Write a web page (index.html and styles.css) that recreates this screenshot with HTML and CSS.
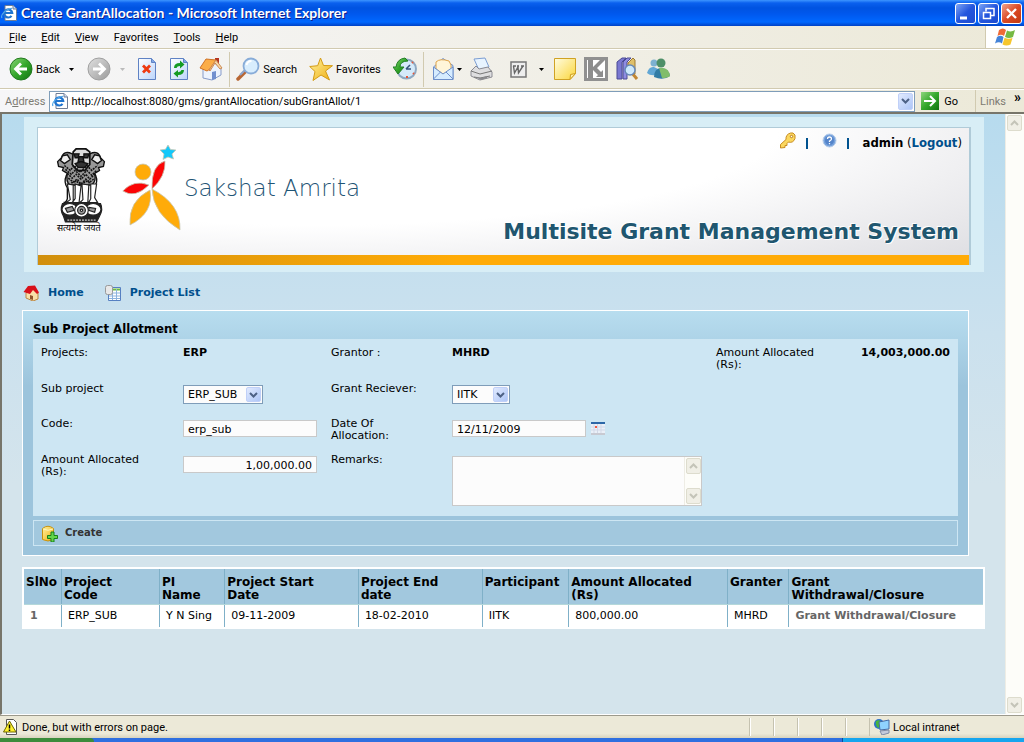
FILE: index.html
```html
<!DOCTYPE html>
<html lang="en">
<head>
<meta charset="utf-8">
<title>Create GrantAllocation</title>
<link rel="stylesheet" href="styles.css">
</head>
<body>
<svg class="defs" aria-hidden="true">
  <defs>
    <linearGradient id="green" x1="0" y1="0" x2="1" y2="1"><stop offset="0" stop-color="#8ed67c"/><stop offset=".5" stop-color="#35a82b"/><stop offset="1" stop-color="#127311"/></linearGradient>
    <linearGradient id="grey" x1="0" y1="0" x2="1" y2="1"><stop offset="0" stop-color="#e0e0e0"/><stop offset="1" stop-color="#9b9b9b"/></linearGradient>
    <linearGradient id="paper" x1="0" y1="0" x2="1" y2="1"><stop offset="0" stop-color="#fff"/><stop offset="1" stop-color="#bcd5fb"/></linearGradient>
    <linearGradient id="note" x1="0" y1="0" x2="1" y2="1"><stop offset="0" stop-color="#fffce0"/><stop offset="1" stop-color="#fbd63a"/></linearGradient>
    <linearGradient id="gold" x1="0" y1="0" x2="1" y2="1"><stop offset="0" stop-color="#fff3a0"/><stop offset="1" stop-color="#efae10"/></linearGradient>
    <symbol id="ie-page" viewBox="0 0 16 16"><path d="M4 .5h8l3.500 3.500v11.500H4z" fill="#fff" stroke="#6f7d96"/><path d="M12 .5V4h3.500" fill="#cfdcf2" stroke="#6f7d96"/><path d="M10.500 10.800a4 4 0 1 1 .7-2.800H3.500" fill="none" stroke="#1f74cf" stroke-width="2.200"/><path d="M1 13C-1 10 6 3 11 3.500" fill="none" stroke="#54a8e8" stroke-width="1.200"/></symbol>
    <symbol id="chev-down" viewBox="0 0 9 6"><path d="M1 1l3.500 3.500L8 1" fill="none" stroke="currentColor" stroke-width="2"/></symbol>
    <symbol id="chev-up" viewBox="0 0 9 6"><path d="M1 5l3.500-3.500L8 5" fill="none" stroke="currentColor" stroke-width="2"/></symbol>
    <symbol id="caret" viewBox="0 0 5 3"><path d="M0 0h5L2.500 3z" fill="currentColor"/></symbol>
  </defs>
</svg>

<header class="titlebar">
  <svg width="16" height="16"><use href="#ie-page"/></svg>
  <h1>Create GrantAllocation - Microsoft Internet Explorer</h1>
  <div class="window-buttons">
    <button class="win" aria-label="Minimize"><svg width="19" height="19"><path d="M4 14h7" stroke="#fff" stroke-width="3"/></svg></button>
    <button class="win" aria-label="Restore"><svg width="19" height="19"><path d="M7 7.500V4.500h8v7h-3M7 4.500h8" fill="none" stroke="#fff" stroke-width="1.500"/><path d="M4.500 8.500h7v6h-7zM4 8.500h8" fill="none" stroke="#fff" stroke-width="1.500"/></svg></button>
    <button class="win close" aria-label="Close"><svg width="19" height="19"><path d="M5 5l9 9M14 5l-9 9" stroke="#fff" stroke-width="2.400"/></svg></button>
  </div>
</header>

<nav class="menubar">
  <button><u>F</u>ile</button><button><u>E</u>dit</button><button><u>V</u>iew</button><button>F<u>a</u>vorites</button><button><u>T</u>ools</button><button><u>H</u>elp</button>
  <div class="throbber"><svg width="20" height="18" viewBox="0 0 20 18"><path d="M4 2q4-3 7 0L9 8Q6 5.500 2.500 8z" fill="#ef6a35"/><path d="M12 2.500q4 2 8-.5l-2 7q-4 2-8 0z" fill="#76b943"/><path d="M2 9q3.500-2.500 6.500 0L7 15.500Q4 13 0 15.500z" fill="#4483d8"/><path d="M9.500 9.700q4 2 8 .3l-2 6.500q-4 2-8 0z" fill="#f6c62d"/></svg></div>
</nav>

<div class="toolbar">
  <button class="tool back"><svg width="24" height="24"><circle cx="12" cy="12" r="11" fill="url(#green)" stroke="#237a20"/><path d="M18 12H7M12 6.500L6.500 12l5.500 5.500" fill="none" stroke="#fff" stroke-width="2.800"/></svg><span>Back</span><svg class="drop" width="5" height="3"><use href="#caret"/></svg></button>
  <button class="tool forward" aria-label="Forward"><svg width="24" height="24"><circle cx="12" cy="12" r="11" fill="url(#grey)" stroke="#a0a0a0"/><path d="M6 12h11M12 6.500l5.500 5.500-5.500 5.500" fill="none" stroke="#fff" stroke-width="2.800"/></svg><svg class="drop pale" width="5" height="3"><use href="#caret"/></svg></button>
  <button class="tool stop" aria-label="Stop"><svg width="20" height="24"><path d="M1.500 1.500h13l4 4v17h-17z" fill="url(#paper)" stroke="#5f82c4"/><path d="M14.500 1.500v4h4" fill="#7fa6e6" stroke="#5f82c4"/><path d="M6 8.500l7 7M13 8.500l-7 7" stroke="#ee3a12" stroke-width="2.800"/></svg></button>
  <button class="tool refresh" aria-label="Refresh"><svg width="20" height="24"><path d="M1.500 1.500h13l4 4v17h-17z" fill="url(#paper)" stroke="#5f82c4"/><path d="M14.500 1.500v4h4" fill="#7fa6e6" stroke="#5f82c4"/><path d="M5 11q0-5 6-5V3.500l4.500 4-4.500 4V9q-3 0-3.500 2zM15 13q0 5-6 5v2.500L4.500 16.500 9 13v2.200q3-.2 3.500-2.200z" fill="#159b24"/></svg></button>
  <button class="tool home" aria-label="Home"><svg width="24" height="24"><path d="M16 1h4v6h-4z" fill="#b53622"/><path d="M4 12v9l9 2 9-5v-7L14 5z" fill="#edf3fd" stroke="#879bc9"/><path d="M1 11L7 2l10 1-6 9-3 2z" fill="#fbad48" stroke="#cf7226"/><path d="M17 3l6 8-2 1-5-6-5 8-1-1z" fill="#f6d8a9" stroke="#ce8850"/><path d="M13 15l4-1v8l-4 1z" fill="#7290cf"/></svg></button>
  <i class="rule"></i>
  <button class="tool search"><svg width="24" height="24"><path d="M10 14L2 22" stroke="#b86633" stroke-width="3.500" stroke-linecap="round"/><path d="M9 13l-5 5" stroke="#8ca4cc" stroke-width="2"/><circle cx="15" cy="9" r="7.500" fill="#d8edfd" stroke="#88acd8" stroke-width="1.800"/><path d="M10.500 8q1-4 5-4" stroke="#fff" stroke-width="2" fill="none"/></svg><span>Search</span></button>
  <button class="tool"><svg width="24" height="24"><path d="M11.500 1l3 7.500 9 .2-7 5.300 4 9-8.500-5-8 5.500 2-9L.7 9.500l8-.8z" fill="url(#gold)" stroke="#d49b15" stroke-linejoin="round"/></svg><span>Favorites</span></button>
  <button class="tool history" aria-label="History"><svg width="24" height="24"><circle cx="13.500" cy="12" r="9.500" fill="#d5eafa" stroke="#8fa9c2" stroke-width="2"/><path d="M13 12l4-4M13 12h5" stroke="#34527c" stroke-width="1.500"/><path d="M14 19v2M20 16l1 1M19 6l1-1" stroke="#e3583b" stroke-width="2"/><path d="M15 4Q7 4 7 10h4l-6 7-5-7h3Q4 2 12 1z" fill="url(#green)" stroke="#217e24"/></svg></button>
  <i class="rule"></i>
  <button class="tool mail" aria-label="Mail"><svg width="23" height="24"><path d="M1.500 10L11 1.500l10 7v14H1.500z" fill="#bddcff" stroke="#6d8fca"/><path d="M4 5q4-4 13-1l2 4v5l-8 4-7-5z" fill="#fff5d9" stroke="#e1a449"/><path d="M1.500 10l9.500 7 10-7v12.500H1.500z" fill="#d6ecff" stroke="#6d8fca"/><path d="M1.500 22l7-7M21 22l-7-7" stroke="#6d8fca"/></svg><svg class="drop" width="5" height="3"><use href="#caret"/></svg></button>
  <button class="tool print" aria-label="Print"><svg width="24" height="24"><path d="M4 2l11-1 4 9-10 3z" fill="#e8f4ff" stroke="#7c9ed3"/><path d="M1 14L6 9l3 3 9-2 4 5v5l-12 3-9-4z" fill="#dedee0" stroke="#8c8c94"/><path d="M1 14l9 3 12-3M4 20l6 1 10-2" stroke="#777" fill="none"/><path d="M6 20l5 1 6-2v2l-6 2z" fill="#8a8a8e"/></svg></button>
  <button class="tool edit" aria-label="Edit"><svg width="17" height="17"><path d="M1 1h15v15H1z" fill="#eee" stroke="#777" stroke-width="1.500"/><path d="M3.500 5l1 7L8 6l.5 6L13 5M3 5h3M7 5h2M11 5h3" fill="none" stroke="#666" stroke-width="1.400"/></svg><svg class="drop" width="5" height="3"><use href="#caret"/></svg></button>
  <button class="tool" aria-label="Notes"><svg width="22" height="22"><path d="M.5.500h21v15l-5.500 6H.5z" fill="url(#note)" stroke="#d0a223"/><path d="M21.500 15.500l-5 1-.5 5z" fill="#fff0a4" stroke="#cf9f20"/></svg></button>
  <button class="tool" aria-label="Kaspersky"><svg width="24" height="24"><path d="M0 0h24v24H0z" fill="#909090"/><path d="M3 3h18v18H3z" fill="#fff"/><path d="M4 3h5v18H4zM16 3h5l-9 9H9v-2zM9 11h4l4 4 2-2v7h-7l2-2-5-5z" fill="#8d8d8d"/></svg></button>
  <button class="tool" aria-label="Research"><svg width="23" height="24"><path d="M1 5l5-4h4L6 5v17H1z" fill="#7a78d1" stroke="#4b4a94"/><path d="M7 5l4-4h4l-4 4v17H7z" fill="#8f8de2" stroke="#4b4a94"/><path d="M12 6l5-5 2 2v14h-7z" fill="#dfc06a" stroke="#9d7a35"/><path d="M16 16l5 6" stroke="#c18632" stroke-width="3"/><circle cx="14" cy="13" r="5" fill="#cde9fc" stroke="#6688b8" stroke-width="1.500"/></svg></button>
  <button class="tool" aria-label="Messenger"><svg width="24" height="24"><circle cx="7" cy="6" r="3.500" fill="#7db1d1"/><path d="M0 16q2-7 7-6l4 2-2 6q-6 1-9-2z" fill="#61a7d5"/><circle cx="14" cy="6" r="4.500" fill="#4e8f68"/><path d="M7 20q0-9 8-9 7 1 8 8-7 5-16 1z" fill="#317ca5"/><path d="M12 11l3 10q6 0 8-2-1-8-8-8z" fill="#80bd6b"/></svg></button>
</div>

<form class="addressbar">
  <label for="url">A<u>d</u>dress</label>
  <div class="address-box">
    <svg width="16" height="16"><use href="#ie-page"/></svg>
    <input id="url" type="text" value="http://localhost:8080/gms/grantAllocation/subGrantAllot/1">
    <button type="button" class="xp-arrow" aria-label="Show addresses"><svg width="9" height="6"><use href="#chev-down"/></svg></button>
  </div>
  <button type="button" class="go"><svg width="18" height="18"><path d="M0 0h18v18H0z" fill="url(#green)"/><path d="M3 9h10M9 4l5 5-5 5" fill="none" stroke="#fff" stroke-width="2"/></svg><span>Go</span></button>
  <button type="button" class="links"><span>Links</span><b>»</b></button>
</form>

<div class="viewport">
  <main class="page">
    <header class="banner-wrap">
      <div class="banner">
        <div class="account">
          <a href="#" aria-label="Change password"><svg width="17" height="17"><path d="M1.500 16v-3.500L7 7.500q-.5-5 4.500-6.500h2.500l2 2v3.500Q14 11.500 9.500 10L8 11.500v2H6v2z" fill="#fbd75e" stroke="#c78c22"/><circle cx="12.500" cy="4.500" r="1.200" fill="#fff" stroke="#b97c15"/></svg></a>
          <i class="bar"></i>
          <a href="#" aria-label="Help"><svg width="15" height="15"><circle cx="7.500" cy="7.500" r="6.500" fill="#76a2dc" stroke="#b7cdea"/><circle cx="7.500" cy="7.500" r="4.500" fill="#5484ca"/><path d="M5.500 6q0-2 2-2t2 2q0 1-2 2v1M7.500 10v1.300" fill="none" stroke="#fff" stroke-width="1.300"/></svg></a>
          <i class="bar"></i>
          <span class="who"><b>admin</b> (<a href="#">Logout</a>)</span>
        </div>
        <div class="brand">
          <svg class="emblem" width="52" height="78" viewBox="0 0 52 78" role="img" aria-label="State Emblem of India">
            <g fill="#fff" stroke="#111" stroke-width="1.400">
              <path d="M11 29Q8 36 12 42v11q-1 4-4 4h35q-3-1-4-4V42q5-6 2-13L34 17H18z" fill="#f4f4f4"/>
              <path d="M17 7Q8 3 6 11l-4 4 1 5 5 1-1 3 5 3q-2 9 3 12h22q5-4 3-12l5-3-1-3 5-1 1-5-4-4Q44 3 35 7z" fill="#999"/>
              <path d="M18 5l3-3h10l4 3v13l-5 6h-8l-5-6z" fill="#ddd" stroke-width="1.800"/>
              <path d="M19 7h5l-1 4h-3zM29 7h5l-1 4h-4zM24 10h4l1 5h-6zM20 17l6-2 7 2-3 4h-7z" fill="#333"/>
              <path d="M7 9l5-1 3 5-6 4-4-3zM45 9l-5-1-3 5 6 4 4-3z" fill="#eee"/>
            </g>
            <g fill="none" stroke="#111" stroke-width="1.600" stroke-dasharray="2 1">
              <path d="M9 19l6 5 4-5 6 7 7-7 5 5 6-5M10 23l6 5 4-4 6 6 6-6 5 5 5-5M12 27l5 5 4-4 5 5 5-5 4 5 5-5M13 32l5 4 4-3 4 5 5-5 4 3 4-3M16 37l5-2 5 4 5-4 4 2"/>
            </g>
            <g fill="#fff" stroke="#222" stroke-width="1.200">
              <path d="M12 38l3 16-4 3h7V39zM20 38v15l-3 4h7l2-17zM27 38l1 16-3 3h8l1-18zM36 38v15l-2 4h9l-3-5 2-14z"/>
              <path d="M7 58h39q3 6-1 13l-3 6H10l-2-6q-4-6-1-13z" fill="#222"/>
              <ellipse cx="14.500" cy="64" rx="8" ry="6"/><ellipse cx="38.500" cy="64" rx="8" ry="6"/>
              <circle cx="26.500" cy="65" r="7"/><circle cx="26.500" cy="65" r="4" fill="#999"/><circle cx="26.500" cy="65" r="1.200"/>
              <path d="M10 63l7-2 2 4-7 2zM34 62l7 1-1 4-6-2z" fill="#999"/>
              <path d="M12 75h29" stroke="#ccc" stroke-dasharray="2 1"/>
            </g>
          </svg>
          <p class="motto">सत्यमेव जयते</p>
        </div>
        <svg class="figure" width="62" height="88" viewBox="0 0 62 88" aria-hidden="true">
          <g stroke="#c6c6b4" stroke-width=".8">
            <path d="M46 2l2.500 4.500 5.500.5-4 4 1.500 5-5.500-2-5 2.500 1-5.500-4-4 5.500-.7z" fill="#14c8fa"/>
            <circle cx="21" cy="29" r="8" fill="#ffab09"/>
            <path d="M30 46Q29 22 43 18q1 15-13 28z" fill="#fb0505"/>
            <path d="M27 42Q12 36 .8 48q12 8 26.200-6z" fill="#fb0505"/>
            <path d="M28 47Q6 58 8 82q24-12 20-35z" fill="#ffab09"/>
            <path d="M30 46q1 25 28 41 1-26-28-41z" fill="#ffab09"/>
          </g>
        </svg>
        <p class="product">Sakshat Amrita</p>
        <h2>Multisite Grant Management System</h2>
      </div>
    </header>

    <nav class="crumbs">
      <a href="#"><svg width="16" height="16"><path d="M3 8v5l7 3 5-2V8L9 3z" fill="#f9dfa8" stroke="#bd8641"/><path d="M.5 7L5 1l7-.5 4 7-2 1.500L10 5 7 9z" fill="#d8101a"/><path d="M7 10l3 1v4l-3-1z" fill="#91552c"/></svg><span>Home</span></a>
      <a href="#"><svg width="16" height="16"><path d="M3.500 2.500h12v13h-12z" fill="#fff" stroke="#5680c2"/><path d="M7 4.500h8" stroke="#6cbd45" stroke-width="2"/><path d="M4 8h11M4 11h11M4 13.500h11M7.500 4v11M11.500 4v11" stroke="#8cb3de"/><rect x=".5" y=".5" width="7" height="9" rx="2" fill="#e8e8e8" stroke="#999"/></svg><span>Project List</span></a>
    </nav>

    <form class="allotment">
      <h3>Sub Project Allotment</h3>
      <div class="fields">
        <span>Projects:</span><b>ERP</b><span>Grantor :</span><b>MHRD</b>
        <div class="total"><span>Amount Allocated (Rs):</span><b>14,003,000.00</b></div>

        <label for="sub">Sub project</label>
        <div class="control"><span class="select wide"><select id="sub"><option>ERP_SUB</option></select><i class="xp-arrow"><svg width="9" height="6"><use href="#chev-down"/></svg></i></span></div>
        <label for="receiver">Grant Reciever:</label>
        <div class="control"><span class="select"><select id="receiver"><option>IITK</option></select><i class="xp-arrow"><svg width="9" height="6"><use href="#chev-down"/></svg></i></span></div>
        <span></span>

        <label for="code">Code:</label>
        <div class="control"><input id="code" type="text" value="erp_sub"></div>
        <label for="date">Date Of Allocation:</label>
        <div class="control"><input id="date" type="text" value="12/11/2009"><button type="button" class="calendar" aria-label="Pick a date"><svg width="14" height="13"><path d="M0 0h14v13H0z" fill="#eaf0f8"/><path d="M0 1h14" stroke="#2c67a7" stroke-width="2"/><path d="M0 5h14M0 8h14M3 2v10M6.500 2v10M10 2v10" stroke="#d3d9e8"/><path d="M4 4h2v2H4z" fill="#f15a43"/><path d="M0 12h14" stroke="#c8cad2" stroke-width="2"/></svg></button></div>
        <span></span>

        <label for="amount">Amount Allocated (Rs):</label>
        <div class="control"><input id="amount" class="number" type="text" value="1,00,000.00"></div>
        <label for="remarks">Remarks:</label>
        <div class="control"><div class="remarks"><textarea id="remarks"></textarea><div class="scroll"><button type="button" aria-label="Scroll up"><svg width="9" height="6"><use href="#chev-up"/></svg></button><button type="button" aria-label="Scroll down"><svg width="9" height="6"><use href="#chev-down"/></svg></button></div></div></div>
        <span></span>
      </div>
      <div class="actions"><button type="button"><svg width="17" height="17"><path d="M1.500 3.500Q7-1 12.500 3.500v11q-5.500 3-11 0z" fill="url(#gold)" stroke="#c7920e"/><path d="M2 4q5 2.500 10 0" fill="none" stroke="#fff6bd"/><path d="M10 7h3v3.500h3.500v3H13V17h-3v-3.500H6.500v-3H10z" fill="#63d54a" stroke="#16801a"/></svg><span>Create</span></button></div>
    </form>

    <table class="grants">
      <colgroup><col class="c-no"><col class="c-code"><col class="c-pi"><col class="c-start"><col class="c-end"><col class="c-part"><col class="c-amount"><col class="c-granter"><col class="c-grant"></colgroup>
      <thead><tr><th>SlNo</th><th>Project<br>Code</th><th>PI<br>Name</th><th>Project Start<br>Date</th><th>Project End<br>date</th><th>Participant</th><th>Amount Allocated<br>(Rs)</th><th>Granter</th><th>Grant<br>Withdrawal/Closure</th></tr></thead>
      <tbody><tr><td><a href="#">1</a></td><td>ERP_SUB</td><td>Y N Sing</td><td>09-11-2009</td><td>18-02-2010</td><td>IITK</td><td>800,000.00</td><td>MHRD</td><td><a href="#">Grant Withdrawal/Closure</a></td></tr></tbody>
    </table>
  </main>
  <div class="scroll"><button aria-label="Scroll page up"><svg width="9" height="6"><use href="#chev-up"/></svg></button><button aria-label="Scroll page down"><svg width="9" height="6"><use href="#chev-down"/></svg></button></div>
</div>

<footer class="statusbar">
  <svg width="16" height="16"><path d="M3.500.5h7l3 3v12h-10z" fill="#fff" stroke="#555"/><path d="M6.500 2L13 13H.5z" fill="#fff22c" stroke="#6d6700"/><path d="M6.500 5.500v4M6.500 10.500V12" stroke="#000" stroke-width="1.500"/></svg>
  <span class="message">Done, but with errors on page.</span>
  <i></i><i></i><i></i><i></i><i></i>
  <span class="zone"><svg width="16" height="16"><circle cx="5" cy="5" r="5" fill="#2e72ca"/><path d="M2 2q4-2 5 1T4 9Q1 6 2 2z" fill="#49b53d"/><path d="M5 3l10-2v9l-9 1z" fill="#8fd2ff" stroke="#466ba5"/><path d="M6 12l9-1v3l-7 2z" fill="#c4cbdc" stroke="#7f8aa5"/></svg><span>Local intranet</span></span>
</footer>
<div class="taskbar"><span class="start"></span><span class="tray"></span></div>
</body>
</html>
```
FILE: styles.css
```css
* { box-sizing: border-box; }
body {
  margin: 0;
  min-height: 100vh;
  display: flex;
  flex-direction: column;
  background: #ece9d8;
  color: #000;
  font: 11px/12px "DejaVu Sans", sans-serif;
}
button, input, select, textarea { font: inherit; color: inherit; margin: 0; border-radius: 0; }
button { background: none; border: 0; padding: 0; }
svg { display: block; flex: none; }
h1, h2, h3, p { margin: 0; }
.defs { position: absolute; width: 0; height: 0; }

.titlebar {
  height: 26px;
  display: flex;
  align-items: center;
  gap: 4px;
  padding-left: 1px;
  background: linear-gradient(#3d95ff 0, #0a60ee 3px, #0053e1 8px, #0058ee 14px, #0068ff 22px, #0041c5 26px);
  color: #fff;
}
.titlebar h1 { flex: 1; font: bold 14px/26px Lato, sans-serif; text-shadow: 1px 1px 0 #0f1e88; white-space: nowrap; }
.window-buttons { display: flex; gap: 2px; padding-right: 2px; }
.win { width: 21px; height: 21px; border: 1px solid #fff; border-radius: 3px; background: linear-gradient(135deg, #7ea5f5, #2456dd 50%, #1c4bd0); }
.close { background: linear-gradient(135deg, #f0a38c, #dc4a26 50%, #c23a12); }

.menubar, .toolbar, .addressbar, .statusbar { font: 11px/14px Roboto, sans-serif; }
.menubar button, .tool span, .addressbar label, .address-box input, .go span, .links span, .message, .zone span { padding-top: 1px; }
.menubar {
  height: 23px;
  display: flex;
  align-items: center;
  gap: 15px;
  padding-left: 9px;
  background: linear-gradient(90deg, #f6f6f8, #ece9d8);
  border-bottom: 1px solid #d1cab0;
}
.throbber { margin-left: auto; align-self: stretch; width: 39px; display: flex; align-items: center; justify-content: center; background: #fff; border-left: 1px solid #d1cab0; }

.toolbar {
  height: 40px;
  display: flex;
  align-items: center;
  gap: 8px;
  padding-left: 9px;
  background: linear-gradient(90deg, #f6f6f8, #ece9d8);
  border-top: 1px solid #fff;
  border-bottom: 1px solid #d1cab0;
}
.tool { display: flex; align-items: center; gap: 3px; }
.back .drop { margin-left: 6px; }
.back { margin-right: 5px; }
.forward { margin-right: 4px; gap: 9px; }
.pale { color: #bbb; }
.stop { margin-right: 4px; }
.refresh { margin-right: 2px; }
.home { margin-right: -2px; }
.search { margin-left: -2px; margin-right: 4px; }
.history { margin-left: 4px; margin-right: -2px; }
.mail { gap: 2px; }
.print { margin-right: 8px; }
.edit { gap: 12px; margin-right: 2px; }
.rule { width: 1px; height: 35px; background: #d1cab0; }

.addressbar {
  height: 23px;
  display: flex;
  align-items: center;
  padding-left: 5px;
  background: linear-gradient(90deg, #f6f6f8, #ece9d8);
  border-top: 1px solid #fff;
}
.addressbar label { color: #7d7b72; padding-right: 4px; }
.address-box { flex: 1; height: 21px; display: flex; align-items: center; gap: 3px; padding: 1px 1px 1px 2px; background: #fff; border: 1px solid #7f9db9; }
.address-box input { flex: 1; min-width: 0; border: 0; padding: 1px 0 0; background: none; outline: 0; }
.xp-arrow { width: 15px; height: 17px; display: grid; place-items: center; color: #4d6185; border: 1px solid #c0d0f8; border-radius: 2px; background: linear-gradient(135deg, #e1eafe, #aec6f7); }
.go { display: flex; align-items: center; gap: 5px; margin-left: 6px; padding-right: 17px; }
.links { display: flex; align-items: center; align-self: stretch; gap: 8px; padding: 0 3px 0 4px; border-left: 1px solid #d1cab0; color: #7d7b72; }
.links b { color: #000; font-size: 14px; line-height: 14px; align-self: start; }

.viewport { flex: 1; display: flex; border-top: 2px solid #77756a; border-left: 2px solid #77756a; border-bottom: 1px solid #fff; }
.page { flex: 1; min-width: 0; padding: 3px 0 12px; background: linear-gradient(#b7dbee, #cbe1ee 220px, #d4e4ec 370px); }
.scroll { width: 17px; display: flex; flex-direction: column; justify-content: space-between; padding: 1px; background: #fdfdf9; border-left: 1px solid #eeede5; }
.scroll button { width: 15px; height: 16px; display: grid; place-items: center; color: #c4c4b8; background: #f0efe6; border: 1px solid #dddccd; border-radius: 2px; }
.viewport > .scroll { width: 19px; padding-right: 3px; }

.banner-wrap { margin: 0 21px 0 22px; padding: 10px 13px 7px; background: #d8eef6; }
.banner {
  position: relative;
  height: 138px;
  display: flex;
  padding-left: 17px;
  border: 1px solid #b0cbd8;
  border-right-width: 2px;
  border-bottom: 0;
  background: linear-gradient(90deg, #d18f0d, #ffab07 45%) bottom / 100% 10px no-repeat, radial-gradient(ellipse at 30% 0, #fff 50%, #e0e0e4 95%);
}
.account { position: absolute; top: 1px; right: 7px; display: flex; align-items: center; }
.account .bar { width: 2px; height: 11px; margin: 6px 14px 0 10px; background: #00528f; }
.account .who { font: 13px/16px "DejaVu Sans Condensed", "DejaVu Sans", sans-serif; padding-top: 6px; }
.account a { color: #004f8c; font-weight: bold; text-decoration: none; }
.brand { padding-top: 19px; width: 54px; }
.emblem { height: 76px; }
.motto { padding-left: 2px; font: 9px/12px "Noto Sans Devanagari", "Noto Sans", sans-serif; white-space: nowrap; }
.figure { margin: 15px 0 0 13px; }
.product { padding: 45px 0 0; color: #1f5575; font: 200 23px/30px "DejaVu Sans", "DejaVu Sans Light", sans-serif; }
.banner h2 { position: absolute; right: 10px; bottom: 17px; color: #20566f; font: bold 22px/32px "DejaVu Sans", sans-serif; text-shadow: 1px 1px #fff, -1px -1px #fff; white-space: nowrap; }

.crumbs { display: flex; gap: 21px; padding: 13px 0 9px 21px; }
.crumbs a { display: flex; align-items: center; gap: 9px; color: #004f8c; font-weight: bold; text-decoration: none; }

.allotment { margin: 0 36px 0 20px; padding: 0 10px 9px; border: 1px solid #fff; background: linear-gradient(#b8ddef, #9cc4dc 75px); }
.allotment h3 { font: bold 13px/14px "DejaVu Sans Condensed", "DejaVu Sans", sans-serif; padding: 11px 0 3px; }
.fields {
  display: grid;
  grid-template-columns: 142fr 148fr 121fr 264fr 234fr;
  grid-template-rows: 36px 35px 36px auto;
  align-items: start;
  padding: 8px 8px 10px;
  background: #cde6f3;
}
.fields > label, .total > span { max-width: 102px; }
.total { display: flex; justify-content: space-between; }
.control { display: flex; align-items: center; padding-top: 2px; }
.control input, .remarks { border: 1px solid #c9c9c9; background: #fcfcfc; }
.control input { width: 134px; height: 17px; padding: 2px 4px 0; }
.control .number { text-align: right; }
.select { display: grid; width: 58px; align-items: center; justify-items: end; border: 1px solid #7f9db9; background: #fcfcfc; }
.select.wide { width: 80px; }
.select > * { grid-area: 1 / 1; }
.select select { appearance: none; width: 100%; height: 17px; padding: 0 18px 0 4px; border: 0; background: none; }
.select .xp-arrow { height: 15px; margin-right: 1px; pointer-events: none; }
.calendar { margin-left: 5px; }
.remarks { display: flex; width: 250px; height: 50px; }
.remarks textarea { flex: 1; min-width: 0; border: 0; background: none; resize: none; overflow: hidden; }
.actions { margin-top: 4px; border: 1px solid #cde6f3; background: #a2c8de; padding: 3px 7px; }
.actions button { display: flex; align-items: center; gap: 7px; height: 18px; color: #333; font-size: 10px; font-weight: bold; }

.grants { width: calc(100% - 40px); margin: 11px 20px 0; table-layout: fixed; border-collapse: collapse; border: 2px solid #fff; background: #fff; }
.grants th, .grants td { text-align: left; vertical-align: top; border-left: 1px solid #7fb0c8; }
.grants th { height: 36px; padding: 7px 0 2px 2px; background: #a2c8de; border-top: 1px solid #b5d8da; border-bottom: 1px solid #b5d8da; font: bold 12px/13px "DejaVu Sans", sans-serif; }
.grants td { height: 23px; padding: 5px 0 5px 6px; white-space: nowrap; }
.grants a { color: #666; font-weight: bold; text-decoration: none; }
.c-no { width: 4%; }
.c-code { width: 10.2%; }
.c-pi { width: 6.8%; }
.c-start { width: 13.9%; }
.c-end { width: 12.9%; }
.c-part { width: 9%; }
.c-amount { width: 16.5%; }
.c-granter { width: 6.4%; }
.c-grant { width: 20.3%; }

.statusbar { height: 23px; display: flex; align-items: center; padding-left: 3px; border-top: 1px solid #9c9a8c; background: linear-gradient(#ece9d8 80%, #d8d3be); }
.message { flex: 1; padding-left: 3px; }
.statusbar > i { width: 24px; height: 18px; border-left: 1px solid #c5c2b0; box-shadow: inset 1px 0 #fff; }
.zone { display: flex; align-items: center; gap: 3px; width: 155px; height: 18px; padding-left: 4px; border-left: 1px solid #c5c2b0; }
.taskbar { height: 4px; display: flex; justify-content: space-between; background: #2f6fe0; }
.start { width: 94px; background: #3c8c3c; border-radius: 0 4px 0 0; }
.tray { width: 182px; background: #16a5ee; border-left: 1px solid #0b4a9c; }
```
